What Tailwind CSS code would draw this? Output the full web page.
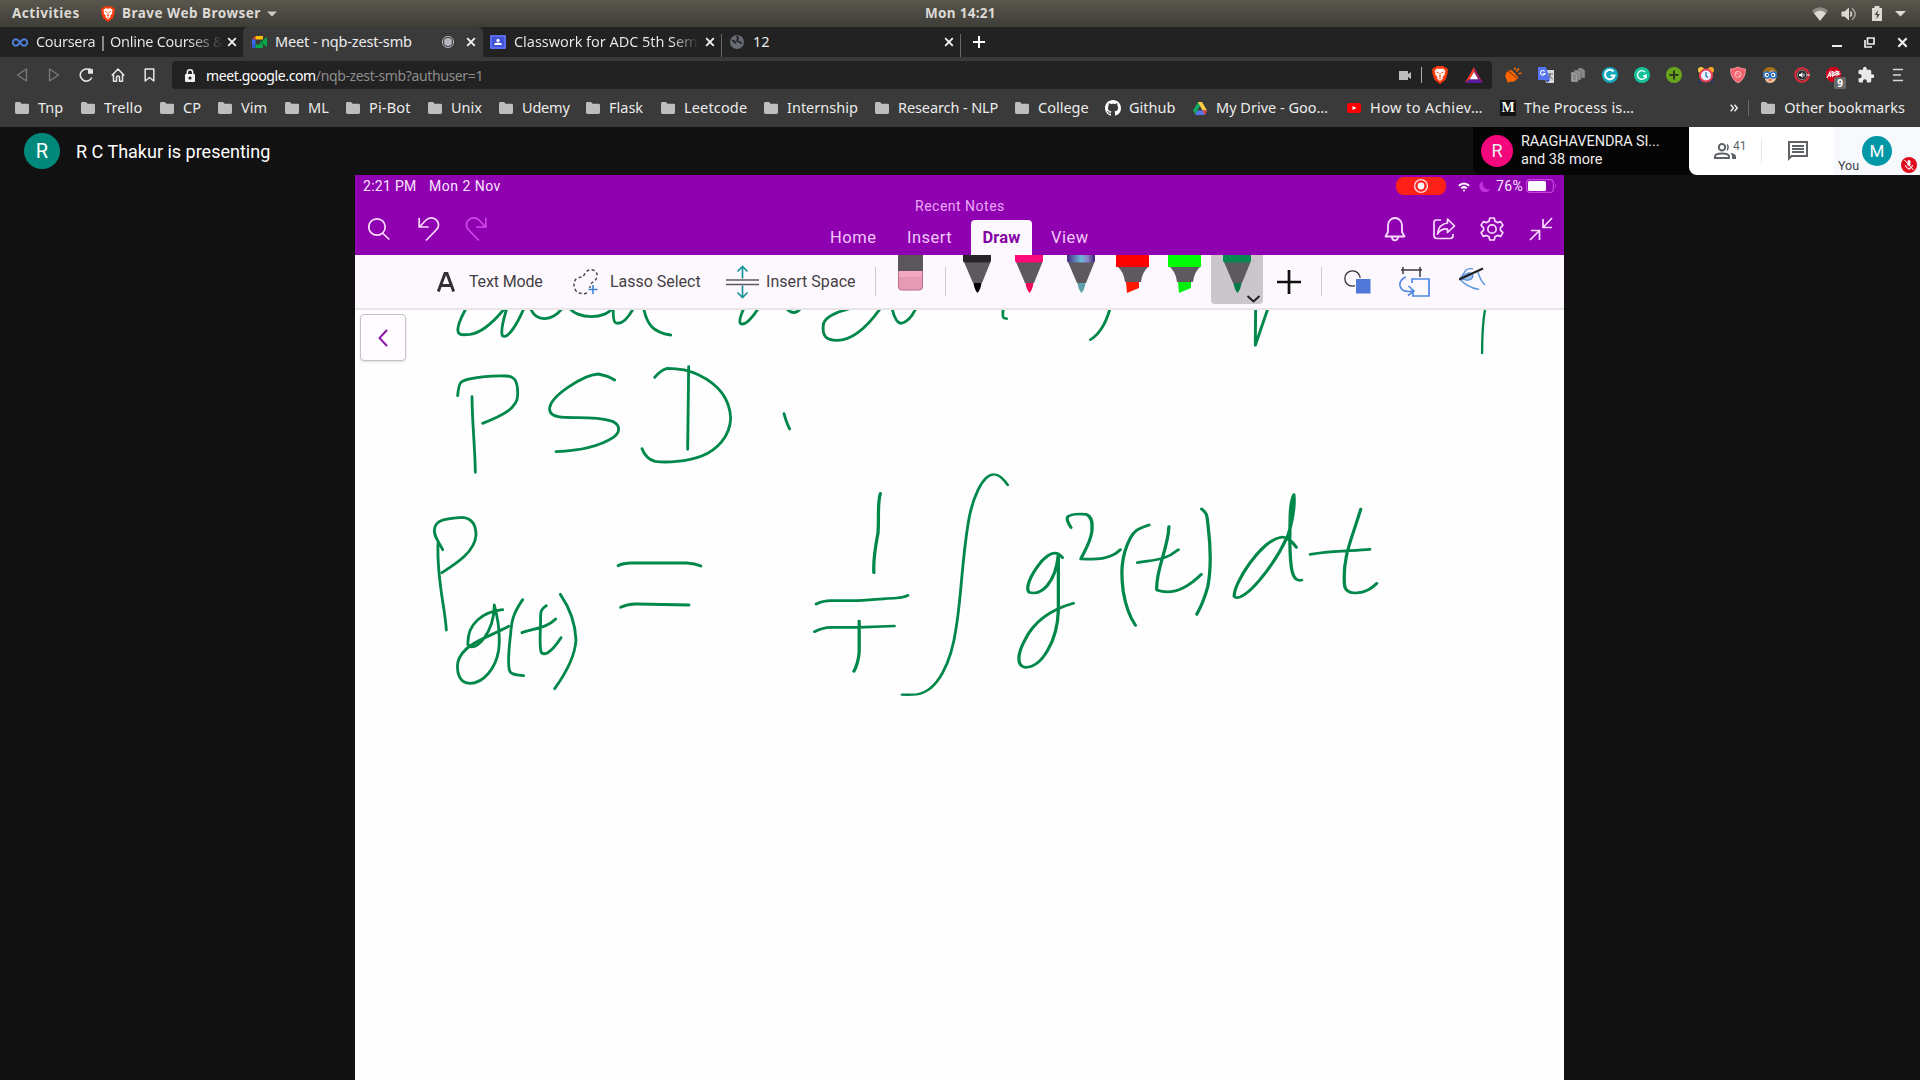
<!DOCTYPE html>
<html lang="en">
<head>
<meta charset="utf-8">
<title>Meet - nqb-zest-smb</title>
<script src="https://cdn.jsdelivr.net/npm/@tailwindcss/browser@4"></script>
</head>
<body class="w-[1920px] h-[1080px] overflow-hidden flex flex-col bg-[#111] font-['Noto_Sans',sans-serif] text-[14.5px] whitespace-nowrap text-[#ececec]">

<svg class="hidden">
  <symbol id="folder" viewBox="0 0 14 12"><path d="M1.5 0H5l1.6 1.8h6A1.4 1.4 0 0 1 14 3.2v7.4a1.4 1.4 0 0 1-1.4 1.4H1.4A1.4 1.4 0 0 1 0 10.600V1.400A1.400 1.400 0 0 1 1.500 0z" fill="#bdbdbd"/></symbol>
  <symbol id="close" viewBox="0 0 10 10"><path d="M1.200 1.200l7.600 7.600M8.800 1.200L1.200 8.800" stroke="#f2f2f2" stroke-width="1.900"/></symbol>
  <symbol id="lion" viewBox="0 0 16 18"><path d="M4.500 0h7l1.500 1.700 1.500-.3L16 4l-.6 1.600.3 1.200-2.200 7L8 18l-5.500-4.200-2.200-7 .3-1.200L0 4l1.500-2.600 1.500.3z" fill="#fb3b0c"/><path d="M8 3l3-.5L13.500 5l-1 1.500.5 1.500-2.500 3 .4 1.600L8 15l-2.900-2.400.4-1.600L3 8l.5-1.500-1-1.500L5 2.500z" fill="#fff"/><path d="M4.500 6l2.300 1M11.500 6L9.200 7M8 7v3.500M6.500 10L8 11l1.500-1M6.800 13L8 12.400l1.200.6" stroke="#fb3b0c" stroke-width=".9" fill="none"/></symbol>
</svg>

<!-- desktop top bar -->
<div class="h-[27px] shrink-0 flex items-center bg-linear-to-b from-[#5a564d] to-[#3e3d38] font-bold text-[#dcdad5] text-[13.500px] relative">
  <span class="ml-[12px] w-[89px] tracking-[0.5px]">Activities</span>
  <svg class="w-[14px] h-[16px]"><use href="#lion"/></svg>
  <span class="ml-[7px] w-[143px] tracking-[0.5px]">Brave Web Browser</span>
  <svg class="w-[10px] h-[6px] ml-[2px]" viewBox="0 0 10 6"><path d="M0 .5h10L5 5.500z" fill="#cfcdc8"/></svg>
  <span class="absolute left-[925px] tracking-[0.3px]">Mon 14:21</span>
  <div class="ml-auto pr-[14px] flex items-center gap-[13px]">
    <svg class="w-[16px] h-[14px]" viewBox="0 0 16 14"><path d="M0 4Q8-3.500 16 4L8 14z" fill="#8d8b85"/><path d="M2 6.200Q8 1 14 6.200L8 13.700z" fill="#dcdad5"/></svg>
    <svg class="w-[16px] h-[14px]" viewBox="0 0 16 14" fill="none" stroke="#dcdad5" stroke-width="1.500"><path d="M.5 4.500h3L8 .5v13L3.500 9.500h-3z" fill="#dcdad5" stroke="none"/><path d="M9.500 4.500Q11.500 7 9.500 9.500"/><path d="M11 1.200Q17.500 7 11 12.800" stroke="#aaa8a2"/></svg>
    <svg class="w-[10px] h-[15px] ml-[2px]" viewBox="0 0 10 15"><path d="M0 2h2.500V0h5v2H10v13H0z" fill="#dcdad5"/><path d="M6 4L2.500 9H5l-.5 4L8 8H5.500z" fill="#4c4a43"/></svg>
    <svg class="w-[11px] h-[6px]" viewBox="0 0 11 6"><path d="M0 0h11L5.500 5.500z" fill="#dcdad5"/></svg>
  </div>
</div>

<!-- tab strip -->
<div class="h-[30px] shrink-0 flex bg-[#222]">
  <div class="w-[243px] flex items-center pl-[12px]">
    <svg class="w-[16px] h-[9px]" viewBox="0 0 16 9" fill="none" stroke="#4a7fd6" stroke-width="2"><path d="M8 4.500C6.500 2 5.500 1.200 4 1.200a3.200 3.200 0 0 0 0 6.500C6.800 7.700 9 1.200 12 1.200a3.200 3.200 0 0 1 0 6.500C10.500 7.700 9.500 7 8 4.500"/></svg>
    <span class="ml-[8px] w-[191px] tracking-[-0.300px] bg-linear-to-r from-[#ececec] from-80% to-transparent to-98% bg-clip-text text-transparent">Coursera | Online Courses &amp;</span>
    <svg class="w-[10px] h-[10px]"><use href="#close"/></svg>
  </div>
  <div class="w-[240px] flex items-center pl-[9px] bg-[#3a3a3a] rounded-t-[5px]">
    <svg class="w-[15px] h-[12px]" viewBox="0 0 15 12"><path d="M0 3.500L3.500 0v3.500z" fill="#e33"/><path d="M3.500 0H11v3.500H3.500z" fill="#ffba00"/><path d="M0 3.500h3.500v5H0z" fill="#3c6df0"/><path d="M0 8.500h3.500V12H1a1 1 0 0 1-1-1z" fill="#2b59d8"/><path d="M3.500 8.500h4.500V6L11 3.500V11a1 1 0 0 1-1 1H3.500z" fill="#0aa84a"/><path d="M11 4.500L14 1.500q1-.5 1 .5v8q0 1-1 .5l-3-3z" fill="#0aa84a"/><path d="M8 6l3-2.500v5z" fill="#067a35"/></svg>
    <span class="ml-[8px] w-[165px] tracking-[-0.15px]">Meet - nqb-zest-smb</span>
    <svg class="w-[14px] h-[14px] ml-[1px]" viewBox="0 0 14 14"><circle cx="7" cy="7" r="5.600" fill="none" stroke="#b5b7be" stroke-width="1"/><circle cx="7" cy="7" r="4" fill="#b5b7be"/></svg>
    <svg class="w-[10px] h-[10px] ml-[11px]"><use href="#close"/></svg>
  </div>
  <div class="w-[239px] flex items-center pl-[7px]">
    <svg class="w-[16px] h-[14px]" viewBox="0 0 16 14"><rect width="16" height="14" rx="1" fill="#5b6cf0"/><rect x="2" y="2" width="12" height="10" fill="#4353d8"/><circle cx="8" cy="5.300" r="1.600" fill="#fff"/><path d="M4 10Q4.500 7.600 8 7.600T12 10z" fill="#fff"/></svg>
    <span class="ml-[8px] w-[185px] tracking-[-0.05px] overflow-hidden bg-linear-to-r from-[#ececec] from-85% to-transparent bg-clip-text text-transparent">Classwork for ADC 5th Sem</span>
    <svg class="w-[10px] h-[10px] ml-[6px]"><use href="#close"/></svg>
    <div class="ml-auto mt-[7px] w-px h-[23px] bg-[#6a6a6a]"></div>
  </div>
  <div class="w-[239px] flex items-center pl-[8px]">
    <svg class="w-[14px] h-[14px]" viewBox="0 0 14 14"><circle cx="7" cy="7" r="7" fill="#686b71"/><path d="M2 5.500Q5 6 5.500 8.500M6.500 1Q9 3 7.500 4.500T9.500 7L12 8.500" stroke="#27282b" stroke-width="2" fill="none"/></svg>
    <span class="ml-[9px]">12</span>
    <svg class="w-[10px] h-[10px] ml-auto mr-[6px]"><use href="#close"/></svg>
    <div class="mt-[7px] w-px h-[23px] bg-[#6a6a6a]"></div>
  </div>
  <div class="flex-1 flex items-center pl-[12px]">
    <svg class="w-[12px] h-[12px]" viewBox="0 0 12 12"><path d="M6 0v12M0 6h12" stroke="#fff" stroke-width="2"/></svg>
    <svg class="ml-auto w-[10px] h-[10px]" viewBox="0 0 10 10"><path d="M0 9h10" stroke="#eee" stroke-width="2"/></svg>
    <svg class="ml-[22px] w-[11px] h-[11px]" viewBox="0 0 11 11" fill="none" stroke="#eee" stroke-width="1.700"><path d="M3.500 1h6.500v6H3.500z"/><path d="M1 3v7h7"/></svg>
    <svg class="ml-[22px] mr-[12px] w-[11px] h-[11px]"><use href="#close"/></svg>
  </div>
</div>

<!-- address bar -->
<div class="h-[36px] shrink-0 flex items-center bg-[#3a3a3a]">
  <div class="w-[172px] pl-[16px] flex items-center">
    <svg class="w-[12px] h-[14px]" viewBox="0 0 12 14"><path d="M10.500 1L1.500 7l9 6z" fill="none" stroke="#7b7b7b" stroke-width="1.300" stroke-linejoin="round"/></svg>
    <svg class="w-[12px] h-[14px] ml-[20px]" viewBox="0 0 12 14"><path d="M1.500 1l9 6-9 6z" fill="none" stroke="#7b7b7b" stroke-width="1.300" stroke-linejoin="round"/></svg>
    <svg class="w-[15px] h-[14px] ml-[19px]" viewBox="0 0 15 14"><path d="M12.800 9.500A6 6 0 1 1 10.500 2" fill="none" stroke="#e6e6e6" stroke-width="1.600"/><path d="M9 .5h3.500v1.300L14 .8v5H9z" fill="#e6e6e6"/></svg>
    <svg class="w-[14px] h-[14px] ml-[17px]" viewBox="0 0 14 14" fill="none" stroke="#e6e6e6" stroke-width="1.500" stroke-linejoin="round"><path d="M.8 7.500L7 1l6.200 6.500M2.500 6.500v6.700h3V9.500a1.500 1.500 0 0 1 3 0v3.700h3V6.500"/></svg>
    <svg class="w-[11px] h-[14px] ml-[19px]" viewBox="0 0 11 14"><path d="M1.200 1h8.600v12L5.500 9.500 1.200 13z" fill="none" stroke="#e6e6e6" stroke-width="1.500" stroke-linejoin="round"/></svg>
  </div>
  <div class="w-[1320px] h-[28px] rounded-[4px] bg-[#222] flex items-center pl-[13px] pr-[9px]">
    <svg class="w-[10px] h-[13px]" viewBox="0 0 10 13"><rect y="5" width="10" height="8" rx="1" fill="#f0f0f0"/><path d="M2.300 5.500V3.500a2.700 2.700 0 0 1 5.400 0v2" fill="none" stroke="#f0f0f0" stroke-width="1.500"/><circle cx="5" cy="9" r="1.600" fill="#222"/></svg>
    <span class="ml-[11px] text-[14px] tracking-[-0.370px]"><span class="text-white">meet.google.com</span><span class="text-[#8d8d8d]">/nqb-zest-smb?authuser=1</span></span>
    <svg class="ml-auto w-[12px] h-[9px]" viewBox="0 0 12 9"><path d="M0 0h9v3l3-2v7L9 6v3H0z" fill="#bdbdbd"/></svg>
    <div class="ml-[10px] w-px h-[16px] bg-[#b0b0b0]"></div>
    <svg class="ml-[10px] w-[16px] h-[18px]"><use href="#lion"/></svg>
    <svg class="ml-[17px] w-[18px] h-[16px]" viewBox="0 0 18 16"><path d="M9 0v5L5 12l-5 4z" fill="#ff3b1f"/><path d="M9 0l9 16-5-4L9 5z" fill="#9e1f63"/><path d="M0 16l5-4h8l5 4z" fill="#5b1a9c"/><path d="M9 5l4.200 7.200H4.800z" fill="#fff"/></svg>
  </div>
  <div class="flex items-center gap-[14px] pl-[13px]">
    <svg class="w-[18px] h-[18px]" viewBox="0 0 18 18"><path d="M3 5l9 7.500a5.500 5.500 0 0 1-7 3L2.500 17 2 14A6 6 0 0 1 3 5z" fill="#f60"/><path d="M3.500 4.500q2-1 4 .5l5 5.500q1 1.500 0 3z" fill="#f60"/><path d="M3.800 5.300l8.200 7" stroke="#7a3410" stroke-width="1"/><path d="M10 1.500v2.500M14 2.500l-2.500 3M16.500 7l-3 .8" stroke="#f60" stroke-width="1.600"/></svg>
    <svg class="w-[18px] h-[18px]" viewBox="0 0 18 18"><path d="M7 4h10v13H9z" fill="#d8d8d8"/><path d="M1 1h8l4 13H2q-1 0-1-1z" fill="#5674f5"/><path d="M9 14h4l-3 3z" fill="#2d49b8"/><path d="M11 8h5M13 7v1q0 4-2 5M12 9q1 3 4 4" stroke="#667" fill="none"/><path d="M7.700 5.500A2.300 2.300 0 1 0 8 7.500H6" fill="none" stroke="#fff" stroke-width="1.100"/></svg>
    <svg class="w-[18px] h-[18px]" viewBox="0 0 18 18" stroke="#555" stroke-width=".6"><path d="M9 2h4l3 2.500V12H9z" fill="#888"/><path d="M5 4h4l3 2.500V14H5z" fill="#909090"/><path d="M2 6h4l3 2.500V16H2z" fill="#a0a0a0"/><path d="M4 9h3M4 11h3M4 13h3"/></svg>
    <svg class="w-[18px] h-[18px]" viewBox="0 0 18 18"><circle cx="9" cy="9" r="8" fill="#15a9c0"/><path d="M12.500 5.500A4.800 4.800 0 1 0 13.500 9.500H9.500" fill="none" stroke="#fff" stroke-width="2"/></svg>
    <svg class="w-[18px] h-[18px]" viewBox="0 0 18 18"><circle cx="9" cy="9" r="8" fill="#15c39a"/><path d="M12 6A4.300 4.300 0 1 0 13 10H10M13 8v4.500" fill="none" stroke="#fff" stroke-width="1.400"/></svg>
    <svg class="w-[18px] h-[18px]" viewBox="0 0 18 18"><circle cx="9" cy="9" r="8" fill="#67a51c"/><path d="M9 4.500v9M4.500 9h9" stroke="#2c3b18" stroke-width="2"/></svg>
    <svg class="w-[18px] h-[18px]" viewBox="0 0 18 18"><path d="M4 14l-2 3M14 14l2 3" stroke="#1d3c7d" stroke-width="1.500"/><circle cx="4" cy="4" r="3" fill="#ffc93c"/><circle cx="14" cy="4" r="3" fill="#f9a825"/><circle cx="9" cy="9.500" r="6" fill="#e8f4ff" stroke="#ef3f56" stroke-width="2"/><path d="M9 6v4l2 1.500" stroke="#26a" fill="none" stroke-width="1.200"/></svg>
    <svg class="w-[18px] h-[18px]" viewBox="0 0 18 18"><path d="M9 1q4 2 7.500 2 0 10-7.500 14Q1.500 13 1.500 3 5 3 9 1z" fill="#f2636f" stroke="#ffa5ac" stroke-width=".8"/><circle cx="9" cy="8.500" r="3" fill="none" stroke="#ffc2c6"/><path d="M7 6.500l4 4" stroke="#ffc2c6"/></svg>
    <svg class="w-[18px] h-[18px]" viewBox="0 0 18 18"><path d="M2 12V6q2-5 7-5t7 5v6z" fill="#a0701c"/><path d="M4 6q5 1 7-2l4 3v6q-2 4-6 4t-5-4z" fill="#f2bf96"/><circle cx="5.700" cy="9" r="3" fill="#fff" stroke="#2671c8" stroke-width="1.700"/><circle cx="12.300" cy="9" r="3" fill="#fff" stroke="#2671c8" stroke-width="1.700"/><circle cx="6" cy="9" r="1" fill="#235"/><circle cx="12" cy="9" r="1" fill="#235"/><path d="M7.500 14h3" stroke="#a33"/></svg>
    <svg class="w-[18px] h-[18px]" viewBox="0 0 18 18"><circle cx="9" cy="9" r="6.800" fill="#333" stroke="#e5293a" stroke-width="2"/><circle cx="9" cy="9" r="4.600" fill="#222" stroke="#888"/><path d="M6 8h1.500L9.500 6v6L7.500 10H6z" fill="#fff"/><path d="M11 7.500v3M13.500 9H17" stroke="#fff"/></svg>
    <div class="relative w-[18px] h-[18px]">
      <svg class="w-[18px] h-[18px]" viewBox="0 0 18 18"><path d="M5.500 1h6L16 5.500v6L11.500 16h-6L1 11.500v-6z" fill="#d0021b"/><path d="M2 12l3-6 .5 5M3.500 9.500h2M7 10V5.500l2.500 1L8 8l2 .8L7 10.500M11 9.500V5l3 1-2 1.500 2.500.5-3 1.500" fill="none" stroke="#fff" stroke-width="1.100"/></svg>
      <span class="absolute left-[9px] top-[11px] w-[12px] h-[12px] rounded-[2px] bg-[#6a6a6a] text-white font-bold text-[10px] leading-[12px] text-center">9</span>
    </div>
    <svg class="w-[18px] h-[18px]" viewBox="0 0 24 24" fill="#e8e8e8"><path d="M20.500 11H19V7c0-1.100-.9-2-2-2h-4V3.500a2.500 2.500 0 0 0-5 0V5H4c-1.100 0-2 .9-2 2v3.800h1.500a2.700 2.700 0 0 1 0 5.400H2V20c0 1.100.9 2 2 2h3.800v-1.500a2.700 2.700 0 0 1 5.400 0V22H17c1.100 0 2-.9 2-2v-4h1.500a2.500 2.500 0 0 0 0-5z"/></svg>
    <svg class="w-[18px] h-[18px]" viewBox="0 0 18 18"><path d="M4 3.500h10M4 9h8M4 14.500h10" stroke="#d8d8d8" stroke-width="1.700"/></svg>
  </div>
</div>

<!-- bookmarks bar -->
<div class="h-[34px] shrink-0 flex items-center bg-[#3a3a3a] pl-[15px] pb-[4px] text-[14.500px]">
  <div class="w-[66px] flex items-center gap-[9px]"><svg class="w-[14px] h-[12px] shrink-0"><use href="#folder"/></svg><span>Tnp</span></div>
  <div class="w-[79px] flex items-center gap-[9px]"><svg class="w-[14px] h-[12px] shrink-0"><use href="#folder"/></svg><span class="tracking-[0.15px]">Trello</span></div>
  <div class="w-[58px] flex items-center gap-[9px]"><svg class="w-[14px] h-[12px] shrink-0"><use href="#folder"/></svg><span>CP</span></div>
  <div class="w-[67px] flex items-center gap-[9px]"><svg class="w-[14px] h-[12px] shrink-0"><use href="#folder"/></svg><span>Vim</span></div>
  <div class="w-[61px] flex items-center gap-[9px]"><svg class="w-[14px] h-[12px] shrink-0"><use href="#folder"/></svg><span>ML</span></div>
  <div class="w-[82px] flex items-center gap-[9px]"><svg class="w-[14px] h-[12px] shrink-0"><use href="#folder"/></svg><span class="tracking-[0.15px]">Pi-Bot</span></div>
  <div class="w-[71px] flex items-center gap-[9px]"><svg class="w-[14px] h-[12px] shrink-0"><use href="#folder"/></svg><span>Unix</span></div>
  <div class="w-[87px] flex items-center gap-[9px]"><svg class="w-[14px] h-[12px] shrink-0"><use href="#folder"/></svg><span class="tracking-[-0.2px]">Udemy</span></div>
  <div class="w-[75px] flex items-center gap-[9px]"><svg class="w-[14px] h-[12px] shrink-0"><use href="#folder"/></svg><span>Flask</span></div>
  <div class="w-[103px] flex items-center gap-[9px]"><svg class="w-[14px] h-[12px] shrink-0"><use href="#folder"/></svg><span class="tracking-[0.15px]">Leetcode</span></div>
  <div class="w-[111px] flex items-center gap-[9px]"><svg class="w-[14px] h-[12px] shrink-0"><use href="#folder"/></svg><span>Internship</span></div>
  <div class="w-[140px] flex items-center gap-[9px]"><svg class="w-[14px] h-[12px] shrink-0"><use href="#folder"/></svg><span class="tracking-[-0.100px]">Research - NLP</span></div>
  <div class="w-[90px] flex items-center gap-[9px]"><svg class="w-[14px] h-[12px] shrink-0"><use href="#folder"/></svg><span>College</span></div>
  <div class="w-[88px] flex items-center gap-[8px]"><svg class="w-[16px] h-[16px] shrink-0" viewBox="0 0 16 16"><path fill="#fff" d="M8 0C3.580 0 0 3.580 0 8c0 3.540 2.290 6.530 5.470 7.590.4.070.55-.17.55-.38 0-.19-.01-.82-.01-1.490-2.010.37-2.530-.49-2.690-.94-.09-.23-.48-.94-.82-1.130-.28-.15-.68-.52-.01-.53.63-.01 1.080.58 1.230.82.72 1.210 1.870.87 2.330.66.07-.52.28-.87.51-1.070-1.780-.2-3.640-.89-3.640-3.950 0-.87.31-1.590.82-2.150-.08-.2-.36-1.020.08-2.120 0 0 .67-.21 2.200.82.64-.18 1.320-.27 2-.27s1.360.09 2 .27c1.530-1.040 2.200-.82 2.200-.82.44 1.100.16 1.920.08 2.120.51.56.82 1.270.82 2.150 0 3.070-1.870 3.750-3.650 3.950.29.25.54.73.54 1.480 0 1.070-.01 1.930-.01 2.200 0 .21.15.46.55.38A8 8 0 0 0 16 8c0-4.420-3.580-8-8-8z"/></svg><span>Github</span></div>
  <div class="w-[154px] flex items-center gap-[9px]"><svg class="w-[14px] h-[13px] shrink-0" viewBox="0 0 14 13"><path d="M5 0h4L2.500 12.500 0 8.500z" fill="#11a861"/><path d="M5 0h4l5 8.500H9.500z" fill="#ffcf48"/><path d="M4.500 8.500H14L11.800 13H2.300z" fill="#5873f0"/><path d="M9.500 8.500H14L11.800 13z" fill="#e9433a"/></svg><span>My Drive - Goo…</span></div>
  <div class="w-[153px] flex items-center gap-[9px]"><svg class="w-[14px] h-[10px] shrink-0" viewBox="0 0 14 10"><rect width="14" height="10" rx="2.500" fill="#f00"/><path d="M5.500 3l4 2-4 2z" fill="#fff"/></svg><span class="tracking-[0.400px]">How to Achiev…</span></div>
  <div class="flex items-center gap-[8px]"><span class="w-[16px] h-[16px] bg-[#111] text-white font-bold font-['Liberation_Serif',serif] text-[14px] leading-[16px] text-center">M</span><span class="tracking-[0.2px]">The Process is…</span></div>
  <div class="ml-auto flex items-center pr-[15px]">
    <svg class="w-[8px] h-[8px]" viewBox="0 0 8 8"><path d="M.7.7L3.500 4 .7 7.300M4.500.7L7.300 4 4.500 7.300" fill="none" stroke="#eee" stroke-width="1.500"/></svg>
    <div class="ml-[10px] w-px h-[16px] bg-[#6a6a6a]"></div>
    <svg class="ml-[12px] w-[14px] h-[12px]"><use href="#folder"/></svg>
    <span class="ml-[9px] tracking-[0.05px]">Other bookmarks</span>
  </div>
</div>

<!-- meeting page -->
<div class="flex-1 flex flex-col bg-[#111]">
  <div class="h-[48px] shrink-0 flex items-start font-[Roboto,sans-serif]">
    <div class="flex items-center h-[48px] pl-[24px] gap-[16px] text-white text-[18px]">
      <span class="w-[36px] h-[36px] rounded-full bg-[#00897b] text-center leading-[36px] text-[20px]">R</span>
      <span>R C Thakur is presenting</span>
    </div>
    <div class="ml-auto flex h-[48px] bg-[#050505] rounded-bl-[8px]">
      <div class="w-[216px] flex items-center pl-[8px] gap-[8px] text-[#eee]">
        <span class="w-[32px] h-[32px] shrink-0 rounded-full bg-[#f4067c] text-center leading-[32px] text-[18px]">R</span>
        <div class="flex flex-col text-[14.500px] leading-[18px]"><span class="tracking-[-0.100px]">RAAGHAVENDRA SI...</span><span class="tracking-[0.05px]">and 38 more</span></div>
      </div>
      <div class="w-[145px] flex items-center bg-white rounded-bl-[8px] text-[#5f6368]">
        <svg class="ml-[25px] w-[22px] h-[16px]" viewBox="0 0 22 16" fill="none" stroke="#5f6368" stroke-width="2"><circle cx="8" cy="4.200" r="3.200"/><path d="M1 15v-1.500Q1 10.500 8 10.500t7 3V15z"/><path d="M12.500.4a4.200 4.200 0 0 1 0 7.600Q14.300 4.200 12.500.4zM16.500 9.800Q22 10.800 22 13.500V16h-4v-2.500q0-2-1.500-3.700z" fill="#5f6368" stroke="none"/></svg>
        <span class="-ml-[3px] mb-[11px] text-[12px]">41</span>
        <div class="ml-[14px] w-px h-[24px] bg-[#e6e6e6]"></div>
        <svg class="ml-[26px] w-[20px] h-[20px]" viewBox="0 0 20 20" fill="none" stroke="#5f6368" stroke-width="2"><path d="M1 17.500V1h18v14H3.500z"/><path d="M4 5h12M4 8h12M4 11h12" stroke-width="1.800"/></svg>
      </div>
      <div class="relative w-[86px] bg-[#f8f9fd]">
        <span class="absolute left-[4px] top-[31px] text-[12.500px] leading-[16px] text-[#3c4043]">You</span>
        <span class="absolute left-[28px] top-[9px] w-[30px] h-[30px] rounded-full bg-[#0097a7] text-center leading-[30px] text-[17px] text-white">M</span>
        <svg class="absolute left-[67px] top-[30px] w-[16px] h-[16px]" viewBox="0 0 16 16"><circle cx="8" cy="8" r="8" fill="#e00b1c"/><rect x="6.500" y="3" width="3" height="6" rx="1.500" fill="#fff"/><path d="M4.500 8a3.500 3.500 0 0 0 7 0M8 11.500V13M3.500 3l9 10" fill="none" stroke="#fff"/></svg>
      </div>
    </div>
  </div>

  <!-- shared tablet screen -->
  <div class="ml-[355px] w-[1209px] flex-1 flex flex-col bg-[#fefefe] font-[Roboto,sans-serif]">
    <div class="h-[80px] shrink-0 flex flex-col bg-[#8f00b1] text-[#f3c9fb]">
      <div class="h-[22px] flex items-center pl-[8px] pr-[7px] text-[14px] tracking-[0.3px] text-[#fbe6ff]">
        <span class="w-[66px]">2:21 PM</span><span class="tracking-[0.500px]">Mon 2 Nov</span>
        <svg class="ml-auto w-[50px] h-[18px] mt-[-1px]" viewBox="0 0 50 18"><rect width="50" height="18" rx="8" fill="#ff2018"/><circle cx="25" cy="9" r="6.400" fill="none" stroke="#ffd9e8" stroke-width="1.400"/><circle cx="25" cy="9" r="3.400" fill="#fff"/></svg>
        <svg class="ml-[12px] mt-[2px] w-[12px] h-[10px]" viewBox="0 0 12 10" fill="none" stroke="#fff" stroke-width="2"><path d="M.8 3.800Q6-.8 11.200 3.800M3.200 6.300Q6 4 8.800 6.300"/><circle cx="6" cy="8.500" r="1" fill="#fff" stroke="none"/></svg>
        <svg class="ml-[9px] w-[11px] h-[11px]" viewBox="0 0 11 11"><path d="M4 0a6.500 6.500 0 0 0 7 8.500A5.800 5.800 0 1 1 4 0z" fill="#c32fdc"/></svg>
        <span class="ml-[6px] tracking-[0.300px]">76%</span>
        <svg class="ml-[3px] w-[31px] h-[14px]" viewBox="0 0 31 14"><rect x=".6" y=".6" width="26.800" height="12.800" rx="3.500" fill="none" stroke="#c445dd" stroke-width="1.200"/><rect x="2" y="2" width="18" height="10" rx="1.500" fill="#fff"/><path d="M29 5v4q2-2 0-4z" fill="#c445dd"/></svg>
      </div>
      <div class="h-[58px] flex items-start">
        <svg class="ml-[13px] mt-[20px] w-[22px] h-[24px]" viewBox="0 0 22 24" fill="none" stroke="#fbdcff" stroke-width="1.700"><circle cx="9" cy="10" r="8.200"/><path d="M15 16.500l6.300 6"/></svg>
        <svg class="ml-[28px] mt-[19px] w-[22px] h-[26px]" viewBox="0 0 22 26" fill="none" stroke="#fbdcff" stroke-width="1.700"><path d="M1.200 2v9h9.500M1.500 11L7.500 4.500Q11 1 15.500 2.200q5 2 5 7 0 2.500-2 4.500L8 24.500"/></svg>
        <svg class="ml-[25px] mt-[19px] w-[22px] h-[26px]" viewBox="0 0 22 26" fill="none" stroke="#d24be8" stroke-width="1.600"><path d="M20.800 2v9h-9.500M20.500 11L14.500 4.500Q11 1 6.500 2.200q-5 2-5 7 0 2.500 2 4.500L14 24.500"/></svg>
        <div class="ml-[343px] w-[260px] flex flex-col">
          <span class="h-[23px] pl-[85px] text-[14px] leading-[18px] tracking-[0.500px] text-[#eba8f7]">Recent Notes</span>
          <div class="flex items-center h-[35px] text-[16.500px] tracking-[0.500px]">
            <span class="w-[77px] pt-[1px]">Home</span><span class="w-[64px] pt-[1px]">Insert</span>
            <span class="w-[61px] h-[35px] rounded-t-[4px] bg-[#fdf8fd] text-[#8400a5] font-bold text-center leading-[36px] tracking-[0.2px]">Draw</span>
            <span class="ml-[19px] pt-[1px]">View</span>
          </div>
        </div>
        <svg class="ml-auto mt-[19px] w-[22px] h-[26px]" viewBox="0 0 22 26" fill="none" stroke="#fbdcff" stroke-width="1.800" stroke-linejoin="round"><path d="M1.500 20.500L4 16V9.500a7 7.500 0 0 1 14 0V16l2.500 4.500zM8 21a3 3.300 0 0 0 6 0"/></svg>
        <svg class="ml-[26px] mt-[20px] w-[24px] h-[24px]" viewBox="0 0 24 24" fill="none" stroke="#fbdcff" stroke-width="1.700" stroke-linejoin="round"><path d="M9 3H4.500Q2 3 2 5.500v13Q2 21.500 5 21.500h13q3 0 3-3V17"/><path d="M15.500 2l7 7-7 6.500V12Q9 11.500 5.500 17 6.500 7 15.500 6z"/></svg>
        <svg class="ml-[24px] mt-[20px] w-[24px] h-[24px]" viewBox="0 0 24 24" fill="none" stroke="#fbdcff" stroke-width="1.700" stroke-linejoin="round"><path d="M9.800 1h4.400l.8 3.300 2.400 1.300 3.300-1 2.200 3.800-2.500 2.400v2.400l2.500 2.400-2.200 3.800-3.300-1-2.400 1.300-.8 3.300H9.800L9 19.700l-2.400-1.300-3.300 1-2.200-3.800 2.500-2.400v-2.400L1.100 8.400l2.200-3.800 3.300 1L9 4.300z"/><circle cx="12" cy="12" r="4.200"/></svg>
        <svg class="ml-[25px] mr-[11px] mt-[19px] w-[24px] h-[26px]" viewBox="0 0 24 26" fill="none" stroke="#fbdcff" stroke-width="1.700"><path d="M23 2L14 11.500M14 3v8.500h9M1 24l9.500-9.500M2 14.500h8.500V24"/></svg>
      </div>
    </div>

    <!-- draw ribbon -->
    <div class="h-[55px] shrink-0 flex items-center bg-[#fdf8fd] border-b-2 border-[#e9e4e9] text-[#444045] text-[16px]">
      <svg class="ml-[82px] w-[18px] h-[20px]" viewBox="0 0 18 20"><path d="M1.300 19.500L8 1.500h2l6.700 18M3.800 13.500h10.400" fill="none" stroke="#333035" stroke-width="3"/></svg>
      <span class="ml-[14px] w-[104px] tracking-[-0.150px] pt-[1px]">Text Mode</span>
      <svg class="w-[25px] h-[26px]" viewBox="0 0 25 26" fill="none"><path d="M14 24Q8 26 3 22-1 15 3 10q3-2 6-2 2-1 3-4 3-4 8-3 5 2 4 7-1 3-4 5-3 2-3 6" stroke="#4a464b" stroke-width="1.500" stroke-dasharray="3 2.400"/><path d="M20 16v9M15.500 20.500h9" stroke="#3d82d8" stroke-width="1.600"/></svg>
      <span class="ml-[12px] w-[116px] tracking-[-0.020px] pt-[1px]">Lasso Select</span>
      <svg class="w-[33px] h-[34px]" viewBox="0 0 33 34" fill="none"><path d="M0 15h33M0 19.500h33" stroke="#5c585d" stroke-width="1.600"/><path d="M16.500 13.500V2M11.500 6.500l5-5 5 5M16.500 20.500V32M11.500 27.500l5 5 5-5" stroke="#15949c" stroke-width="1.700"/></svg>
      <span class="ml-[7px] w-[109px] tracking-[0.050px] pt-[1px]">Insert Space</span>
      <div class="w-px h-[29px] bg-[#cfcad0]"></div>
      <svg class="self-start ml-[22px] w-[25px] h-[52px]" viewBox="0 0 25 52"><path d="M0 0h25v16H0z" fill="#5b565b"/><path d="M.5 16h24v16q0 3-3 3h-18q-3 0-3-3z" fill="#e79ab3"/><path d="M.5 16h24v6H.5z" fill="#f3a9c0"/><path d="M.5 16v16q0 3 3 3h18q3 0 3-3V16" fill="none" stroke="#b97089"/></svg>
      <div class="ml-[22px] w-px h-[29px] bg-[#cfcad0]"></div>
      <svg class="self-start ml-[5px] w-[52px] h-[52px]" viewBox="0 0 52 52"><path d="M13 7h26.500L31 28H22z" fill="#5e595e"/><path d="M12 0h28v5.500q0 2-2 2H14q-2 0-2-2z" fill="#262427"/><path d="M22.500 28h8q-1 7-4 10-3-3-4-10z" fill="#000"/></svg>
      <svg class="self-start w-[52px] h-[52px]" viewBox="0 0 52 52"><path d="M13 7h26.500L31 28H22z" fill="#5e595e"/><path d="M12 0h28v5.500q0 2-2 2H14q-2 0-2-2z" fill="#ff0a7a"/><path d="M22.500 28h8q-1 7-4 10-3-3-4-10z" fill="#f0085f"/></svg>
      <svg class="self-start w-[52px] h-[52px]" viewBox="0 0 52 52"><defs><linearGradient id="galaxy"><stop offset="0" stop-color="#452a80"/><stop offset=".5" stop-color="#6fb8da"/><stop offset=".75" stop-color="#8a7fc8"/><stop offset="1" stop-color="#3b2170"/></linearGradient></defs><path d="M13 7h26.500L31 28H22z" fill="#5e595e"/><path d="M12 0h28v5.500q0 2-2 2H14q-2 0-2-2z" fill="url(#galaxy)"/><path d="M22.500 28h8q-1 7-4 10-3-3-4-10z" fill="#5f9fa8"/></svg>
      <svg class="self-start w-[52px] h-[52px]" viewBox="0 0 52 52"><path d="M10 11h32q-7 6-8 16H18Q17 17 10 11z" fill="#5e595e"/><path d="M9 0h33v12H9z" fill="#fd0000"/><path d="M19 27h13v6l-12 5z" fill="#fd1a00"/></svg>
      <svg class="self-start w-[52px] h-[52px]" viewBox="0 0 52 52"><path d="M10 11h32q-7 6-8 16H18Q17 17 10 11z" fill="#5e595e"/><path d="M9 0h33v12H9z" fill="#00fa08"/><path d="M19 27h13v6l-12 5z" fill="#00ee0c"/></svg>
      <svg class="self-start w-[52px] h-[52px]" viewBox="0 0 52 52"><path d="M0 0h52v45q0 4-4 4H4q-4 0-4-4z" fill="#cbc6cb"/><path d="M13 7h26.500L31 28H22z" fill="#5e595e"/><path d="M12 0h28v5.500q0 2-2 2H14q-2 0-2-2z" fill="#078851"/><path d="M22.500 28h8q-1 7-4 10-3-3-4-10z" fill="#057c48"/><path d="M36.500 41l6 5.500 6-5.500" fill="none" stroke="#1c1a1c" stroke-width="1.800"/></svg>
      <svg class="ml-[14px] w-[24px] h-[24px]" viewBox="0 0 24 24"><path d="M12 0v24M0 12h24" stroke="#111" stroke-width="2.700"/></svg>
      <div class="ml-[20px] w-px h-[29px] bg-[#cfcad0]"></div>
      <svg class="ml-[22px] w-[27px] h-[24px]" viewBox="0 0 27 24"><circle cx="8.500" cy="8.500" r="7.700" fill="none" stroke="#333" stroke-width="1.300"/><rect x="11" y="8" width="16" height="16" fill="#fdf8fd"/><rect x="12" y="9" width="14.500" height="14.500" fill="#4f78d8"/></svg>
      <svg class="ml-[28px] w-[31px] h-[30px]" viewBox="0 0 31 30" fill="none"><path d="M2 3h21M4 0v7M21 0v10" stroke="#3b383c" stroke-width="1.500"/><path d="M13 16v-4h17v17H14v-4" stroke="#4e86e0" stroke-width="1.700"/><path d="M7 10Q0 13 1 19q2 7 13 5M9.500 19l5.500 5-6 4.500" stroke="#4e86e0" stroke-width="1.600"/></svg>
      <svg class="ml-[29px] -mt-[5px] w-[27px] h-[24px]" viewBox="0 0 27 24" fill="none"><path d="M1 12L7 3q3-2 7-1M19 5q2 8 7 13M1 12q6 8 19 10.500" stroke="#5c96dc" stroke-width="1.400"/><path d="M7 7q6-3 7 2-1 5-7 4-4-1-6-1z" fill="#9cc2ef" stroke="#4a86d2" stroke-width="1.200"/><path d="M0 12.500L24 1.500" stroke="#222" stroke-width="2.200"/></svg>
    </div>

    <!-- note canvas -->
    <div class="relative flex-1">
      <svg class="block w-[1209px] h-[770px]" viewBox="355 310 1209 770" fill="none" stroke="#00874a" stroke-linecap="round" stroke-linejoin="round">
        <g transform="translate(420 300) scale(.33333)" stroke-width="8.500">
          <path d="M141 20Q110 75 114 94C116 106 130 105 150 103C190 98 225 60 250 30M262 20Q240 90 247 107C265 120 295 65 314 20M330 20C345 70 400 65 430 20M445 20C470 60 560 60 580 20M580 20Q578 66 588 69C610 75 630 45 643 20M670 20C680 75 700 97 752 105"/>
          <path d="M974 20Q955 60 961 70C975 80 1000 50 1018 20M1095 20Q1122 55 1146 20M1300 23C1250 35 1212 50 1210 75C1206 110 1220 120 1250 121C1300 122 1350 70 1385 20M1415 20Q1425 68 1443 70Q1470 66 1490 20"/>
          <path d="M113 287Q116 250 125 245C150 232 220 226 260 228C285 229 294 245 293 285C293 325 245 348 188 370M156 290C156 360 165 440 166 517"/>
          <path d="M584 240Q560 226 535 222C490 225 385 290 389 330C393 370 500 340 570 362C600 370 605 395 580 412C540 438 480 452 408 455"/>
          <path d="M704 232Q725 208 742 205C770 205 810 212 835 224C900 255 930 300 932 355C930 410 890 450 845 468C800 485 740 489 705 484C685 478 672 462 666 446M806 200L803 448"/>
          <path d="M1092 341Q1100 370 1109 387"/>
          <path d="M68 749C50 715 43 710 43 690C45 660 75 655 128 652C155 655 168 675 168 705C165 755 110 790 66 818M54 730C50 840 75 920 79 990"/>
          <path d="M248 929C190 935 140 970 144 1035C165 1060 222 1000 223 915C235 960 242 1000 236 1050C228 1105 190 1150 150 1150C120 1150 108 1120 114 1085C130 1030 200 1015 266 979"/>
          <path d="M308 899C280 940 275 960 272 1000C265 1060 262 1100 270 1115C275 1125 290 1125 311 1127M379 917C362 928 361 935 362 960Q358 1045 364 1058C380 1072 405 1040 423 1013M306 998C340 985 380 985 407 957M421 883C450 925 466 970 468 1020C465 1070 430 1130 404 1166"/>
          <path d="M594 797Q610 788 640 789H800Q825 790 843 798M602 922Q625 911 650 912L807 915"/>
        </g>
        <g transform="translate(780 460) scale(.40816 .33333)" stroke-width="8">
          <path d="M246 100C238 130 243 180 240 220C232 270 228 300 230 338M89 432Q105 422 125 422H190C230 419 260 416 285 414Q305 412 313 406M85 515Q105 502 125 502H190L280 498M194 483V575Q192 610 181 634"/>
          <path d="M558 75C545 52 535 43 525 43C495 42 470 120 461 190C445 310 445 400 432 500C420 610 385 695 335 703Q320 705 299 704" stroke-width="7"/>
          <path d="M692 293C675 265 655 285 640 305C610 350 602 385 610 397C640 408 675 370 682 284V450C680 545 640 622 602 622C580 620 580 585 600 540C620 490 660 450 719 430"/>
          <path d="M713 203Q700 178 705 170C715 162 735 161 750 163C765 170 766 190 764 215C760 250 745 275 737 297C780 298 810 298 834 269"/>
          <path d="M904 195C875 207 868 212 858 235C835 290 835 340 841 395Q850 460 871 496M953 200C950 270 920 330 923 390C950 402 985 400 1032 343M876 308C925 298 945 300 976 269M1033 147C1047 160 1046 165 1049 200C1057 280 1056 330 1048 380Q1038 425 1021 463"/>
          <path d="M1265 262C1250 235 1235 230 1227 232C1180 240 1110 370 1113 410C1135 432 1210 320 1245 225C1256 180 1262 140 1259 104C1248 130 1250 180 1249 240C1250 320 1253 368 1278 360M1423 147C1400 240 1378 290 1383 375C1385 410 1435 405 1462 370M1299 283C1350 272 1400 273 1445 268"/>
        </g>
        <g transform="translate(960 290) scale(.38904 .33333)" stroke-width="7.500">
          <path d="M112 50Q108 82 113 84L120 86M387 50Q370 125 335 149M760 50L759 166L793 50"/>
          <path d="M1351 50Q1342 100 1342 190" stroke-width="6"/>
        </g>
      </svg>
      <div class="absolute left-[5px] top-[4px] w-[46px] h-[47px] rounded-[4px] border border-[#c9bfc9] bg-[#fefcfe] flex items-center justify-center shadow-sm">
        <svg class="w-[10px] h-[18px]" viewBox="0 0 10 18"><path d="M9 1L1.500 9 9 17" fill="none" stroke="#8b12a3" stroke-width="1.900"/></svg>
      </div>
    </div>
  </div>
</div>
</body>
</html>
